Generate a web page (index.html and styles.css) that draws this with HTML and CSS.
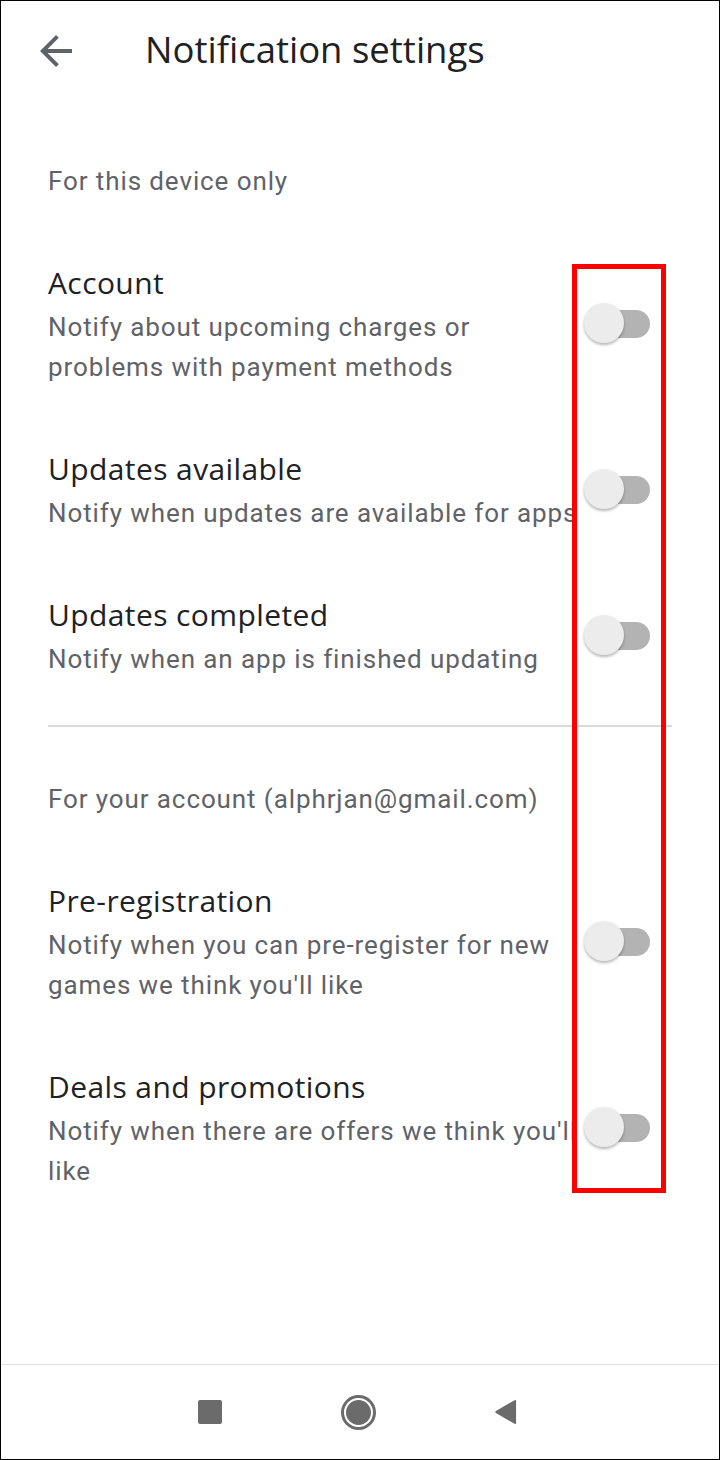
FILE: index.html
```html
<!DOCTYPE html>
<html lang="en">
<head>
    <meta charset="UTF-8">
    <title>Notification settings</title>
    <link rel="stylesheet" href="styles.css">
</head>
<body>
    <div class="screen">
        <header class="appbar">
            <svg class="back" viewBox="0 0 24 24" width="48" height="48">
                <path d="M20 11H7.83l5.59-5.59L12 4l-8 8 8 8 1.41-1.41L7.83 13H20v-2z" fill="#5f6368"/>
            </svg>
            <h1>Notification settings</h1>
        </header>

        <main class="content">
            <p class="label label-first">For this device only</p>

            <div class="setting">
                <div class="setting-text">
                    <h2>Account</h2>
                    <p>Notify about upcoming charges or problems with payment methods</p>
                </div>
                <span class="switch"><span class="track"></span><span class="thumb"></span></span>
            </div>

            <div class="setting">
                <div class="setting-text">
                    <h2>Updates available</h2>
                    <p class="nowrap">Notify when updates are available for apps</p>
                </div>
                <span class="switch"><span class="track"></span><span class="thumb"></span></span>
            </div>

            <div class="setting">
                <div class="setting-text">
                    <h2>Updates completed</h2>
                    <p>Notify when an app is finished updating</p>
                </div>
                <span class="switch"><span class="track"></span><span class="thumb"></span></span>
            </div>

            <div class="divider"></div>

            <p class="label">For your account (alphrjan@gmail.com)</p>

            <div class="setting">
                <div class="setting-text">
                    <h2>Pre-registration</h2>
                    <p>Notify when you can pre-register for new games we think you'll like</p>
                </div>
                <span class="switch"><span class="track"></span><span class="thumb"></span></span>
            </div>

            <div class="setting">
                <div class="setting-text">
                    <h2>Deals and promotions</h2>
                    <p>Notify when there are offers we think you'll like</p>
                </div>
                <span class="switch"><span class="track"></span><span class="thumb"></span></span>
            </div>
        </main>

        <nav class="navbar">
            <span class="nav-btn"><span class="nav-square"></span></span>
            <span class="nav-btn"><span class="nav-home"></span></span>
            <span class="nav-btn">
                <svg viewBox="0 0 24 26" width="23" height="26">
                    <path d="M22 1.5v23a1 1 0 0 1-1.6.8L1 14a1.2 1.2 0 0 1 0-2L20.4.7A1 1 0 0 1 22 1.5z" fill="#6b6b6b"/>
                </svg>
            </span>
        </nav>

        <div class="highlight"></div>
    </div>
</body>
</html>
```

FILE: styles.css
```css
body{
    margin:0;
    background:#fff;
    font-family:Roboto, "Liberation Sans", sans-serif;
}
.screen{
    width:720px;height:1460px;
    box-sizing:border-box;
    border:1px solid #000;
    position:relative;
    display:flex;
    flex-direction:column;
    background:#fff;
}
/* top bar */
.appbar{
    height:99px;
    display:flex;
    align-items:center;
    padding-left:31px;
}
.appbar .back{
    display:block;
    margin-top:1px;
}
.appbar h1{
    margin:-3px 0 0 65px;
    font-family:"Open Sans", Roboto, sans-serif;
    font-size:36.5px;
    font-weight:400;
    line-height:44px;
    color:#202124;
}
/* list */
.content{
    padding:0 47px;
}
.label{
    margin:52px 0 31px;
    font-size:26px;
    letter-spacing:0.9px;
    line-height:40px;
    color:#5f6368;
}
.label-first{
    margin-top:61px;
}
.setting{
    display:flex;
    align-items:center;
    padding:31px 0;
}
.setting-text{
    flex:1;
    min-width:0;
}
.setting-text h2{
    margin:0;
    font-family:"Open Sans", Roboto, sans-serif;
    font-size:30px;
    letter-spacing:0.4px;
    font-weight:400;
    line-height:40px;
    color:#202124;
}
.setting-text p{
    margin:4px 0 0;
    font-size:26px;
    letter-spacing:0.9px;
    line-height:40px;
    color:#5f6368;
}
.setting-text p.nowrap{
    white-space:nowrap;
}
.switch{
    flex:none;
    position:relative;
    width:66px;height:40px;
    margin:-4px 22px 0 0;
}
.switch .track{
    position:absolute;
    right:0;top:7px;
    width:56px;height:28px;
    border-radius:14px;
    background:#b3b3b3;
}
.switch .thumb{
    position:absolute;
    left:0;top:0;
    width:40px;height:40px;
    border-radius:50%;
    background:#ececec;
    box-shadow:0 2px 3px rgba(0,0,0,0.28);
}
.divider{
    margin-top:15px;
    height:2px;
    background:#dadada;
}
/* system nav */
.navbar{
    margin-top:auto;
    height:94px;
    border-top:1px solid #e3e3e3;
    display:flex;
    justify-content:center;
    align-items:center;
    gap:100px;
    padding-right:4px;
}
.nav-btn{
    width:48px;height:48px;
    display:flex;
    align-items:center;
    justify-content:center;
}
.nav-btn svg{
    display:block;
}
.nav-square{
    width:24px;height:24px;
    border-radius:2px;
    background:#6b6b6b;
}
.nav-home{
    width:25px;height:25px;
    border-radius:50%;
    background:#6b6b6b;
    box-shadow:0 0 0 2px #fff,0 0 0 5px #6b6b6b;
}
/* annotation */
.highlight{
    position:absolute;
    left:571px;top:263px;
    width:94px;height:929px;
    box-sizing:border-box;
    border:5px solid #ff0000;
}
```
